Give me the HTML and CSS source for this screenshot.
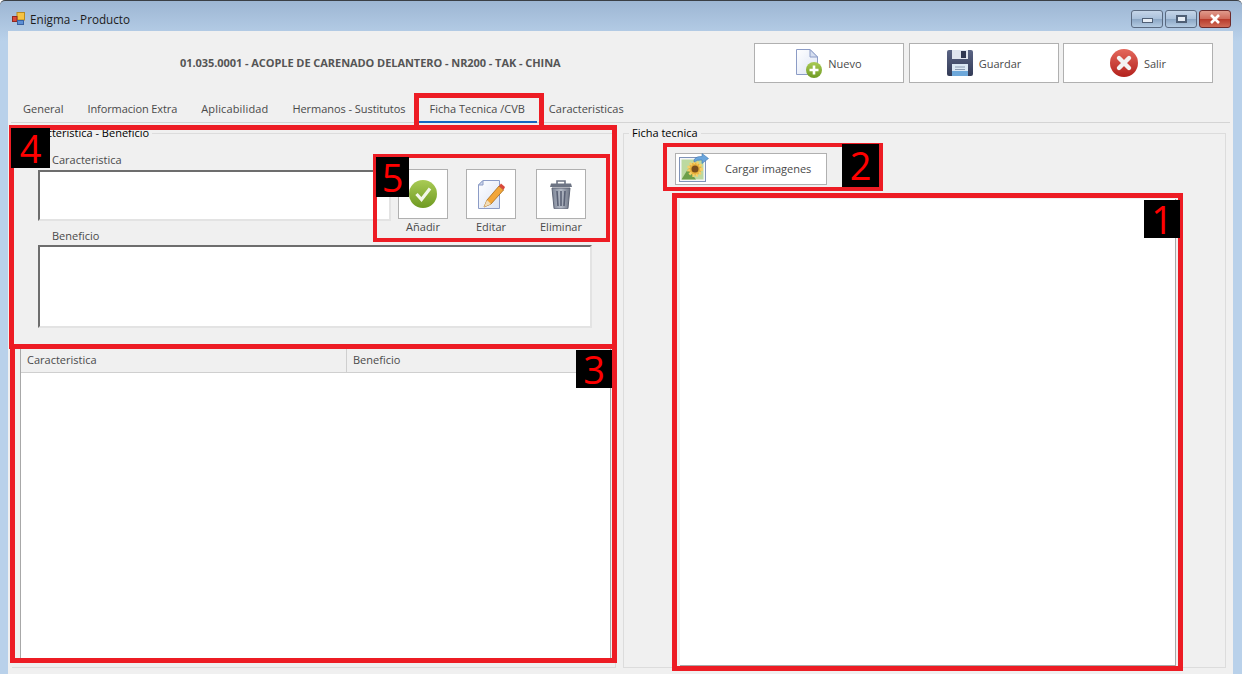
FILE: index.html
```html
<!DOCTYPE html>
<html>
<head>
    <meta charset="UTF-8">
    <title>Enigma - Producto</title>
    <link rel="stylesheet" href="styles.css">
</head>
<body>
<svg class="defs" width="0" height="0">
    <defs>
        <linearGradient id="red" x1="0" y1="0" x2="0" y2="1"><stop offset="0" stop-color="#e4685c"/><stop offset="1" stop-color="#b3211c"/></linearGradient>
        <linearGradient id="green" x1="0" y1="0" x2="0" y2="1"><stop offset="0" stop-color="#a9cb55"/><stop offset="1" stop-color="#6f9a22"/></linearGradient>
        <linearGradient id="disk" x1="0" y1="0" x2="0" y2="1"><stop offset="0" stop-color="#5a6484"/><stop offset="1" stop-color="#333b57"/></linearGradient>
        <linearGradient id="can" x1="0" y1="0" x2="1" y2="0"><stop offset="0" stop-color="#7d8596"/><stop offset="0.5" stop-color="#b4bac6"/><stop offset="1" stop-color="#6d7484"/></linearGradient>
        <linearGradient id="sheet" x1="0" y1="0" x2="1" y2="1"><stop offset="0" stop-color="#ffffff"/><stop offset="1" stop-color="#dbe3f4"/></linearGradient>
    </defs>
</svg>
<div class="window">
    <!-- title bar -->
    <div class="titlebar">
        <svg class="appicon" width="13" height="13" viewBox="0 0 13 13">
            <rect x="5" y="0.5" width="7.5" height="7.5" fill="#f6c343" stroke="#b98a1e"/>
            <rect x="0.5" y="4.5" width="4.5" height="5" fill="#d9483b" stroke="#8f2a22"/>
            <rect x="5.5" y="8.5" width="6" height="4" fill="#5b8fd6" stroke="#3a62a0"/>
        </svg>
        <span class="wintitle">Enigma - Producto</span>
        <div class="winbtns">
            <div class="winbtn"><span class="glyph-min"></span></div>
            <div class="winbtn"><span class="glyph-max"></span></div>
            <div class="winbtn close">
                <svg width="14" height="10" viewBox="0 0 14 10"><path d="M3 1 L11 9 M11 1 L3 9" stroke="#fff" stroke-width="2.6"/></svg>
            </div>
        </div>
    </div>

    <div class="client">
        <!-- product name and main actions -->
        <div class="header">
            <div class="product">01.035.0001 - ACOPLE DE CARENADO DELANTERO - NR200 - TAK - CHINA</div>
            <div class="actions">
                <button class="action" type="button">
                    <svg width="26" height="29" viewBox="0 0 26 29">
                        <path d="M0.5 0.5 H14 L21.5 8 V25.5 H0.5 Z" fill="url(#sheet)" stroke="#8c9cc6"/>
                        <path d="M14 0.5 V8 H21.5 Z" fill="#d5def0" stroke="#8c9cc6"/>
                        <circle cx="18" cy="21" r="8" fill="url(#green)"/>
                        <path d="M18 16.5 V25.5 M13.5 21 H22.5" stroke="#fff" stroke-width="2.6"/>
                    </svg>
                    <span>Nuevo</span>
                </button>
                <button class="action" type="button">
                    <svg width="26" height="26" viewBox="0 0 26 26">
                        <rect width="26" height="26" rx="2" fill="url(#disk)"/>
                        <rect x="5" y="0" width="16" height="9" fill="#dfe4ee"/>
                        <rect x="14" y="1" width="5" height="7" fill="#2f3650"/>
                        <rect x="5" y="14" width="16" height="12" fill="#dbe8f4"/>
                        <rect x="5" y="21" width="16" height="5" fill="#6ea8da"/>
                        <path d="M8 17 H18 M8 19.5 H18" stroke="#8a9ab0"/>
                    </svg>
                    <span>Guardar</span>
                </button>
                <button class="action" type="button">
                    <svg width="28" height="28" viewBox="0 0 28 28">
                        <circle cx="14" cy="14" r="14" fill="url(#red)"/>
                        <path d="M9 9 L19 19 M19 9 L9 19" stroke="#f3f3f3" stroke-width="4.4" stroke-linecap="round"/>
                    </svg>
                    <span>Salir</span>
                </button>
            </div>
        </div>

        <!-- tabs -->
        <div class="tabs">
            <a class="tab">General</a>
            <a class="tab tight">Informacion Extra</a>
            <a class="tab loose">Aplicabilidad</a>
            <a class="tab snug">Hermanos - Sustitutos</a>
            <a class="tab active">Ficha Tecnica /CVB</a>
            <a class="tab">Caracteristicas</a>
        </div>

        <div class="panels">
            <div class="leftcol">
                <fieldset class="group topgroup">
                    <legend>Caracteristica - Beneficio</legend>
                    <div class="topinner">
                        <div class="fieldrow">
                            <div class="field">
                                <label>Caracteristica</label>
                                <div class="textbox small"></div>
                            </div>
                            <div class="tools">
                                <div class="tool">
                                    <div class="toolbtn">
                                        <svg width="28" height="28" viewBox="0 0 28 28">
                                            <circle cx="14" cy="14" r="14" fill="url(#green)"/>
                                            <path d="M7.5 14 L12.5 19.5 L21 8.5" fill="none" stroke="#f4f7ea" stroke-width="3.2"/>
                                        </svg>
                                    </div>
                                    <span>Añadir</span>
                                </div>
                                <div class="tool">
                                    <div class="toolbtn">
                                        <svg width="27" height="29" viewBox="0 0 27 29">
                                            <path d="M0.5 5 L5 0.5 H21.5 V28.5 H0.5 Z" fill="url(#sheet)" stroke="#8c9cc6"/>
                                            <path d="M0.5 5 H5 V0.5 Z" fill="#cfd8ec" stroke="#8c9cc6"/>
                                            <path d="M6 27 L9 20 L21 6 L25.5 10 L13 24 Z" fill="#f2a63a" stroke="#a86a14" stroke-width="0.8"/>
                                            <path d="M21 6 L23 3.5 L27 7 L25.5 10 Z" fill="#d9483b"/>
                                            <path d="M6 27 L9 20 L13 24 Z" fill="#f2ddb8"/>
                                        </svg>
                                    </div>
                                    <span>Editar</span>
                                </div>
                                <div class="tool last">
                                    <div class="toolbtn">
                                        <svg width="22" height="29" viewBox="0 0 22 29">
                                            <path d="M7 4 V1 H15 V4" fill="none" stroke="#6d7484" stroke-width="1.6"/>
                                            <path d="M1 3.5 H21 L22 7 H0 Z" fill="#6d7484"/>
                                            <path d="M2 8 H20 L18 28 Q18 29 17 29 H5 Q4 29 4 28 Z" fill="url(#can)" stroke="#5c6374"/>
                                            <path d="M7 11 L8 26 M11 11 V26 M15 11 L14 26" stroke="#596074" stroke-width="1.6"/>
                                        </svg>
                                    </div>
                                    <span>Eliminar</span>
                                </div>
                            </div>
                        </div>
                        <div class="field">
                            <label>Beneficio</label>
                            <div class="textbox large"></div>
                        </div>
                    </div>
                </fieldset>
                <div class="table">
                    <div class="thead">
                        <div class="th first">Caracteristica</div>
                        <div class="th">Beneficio</div>
                    </div>
                </div>
            </div>

            <fieldset class="group rightgroup">
                <legend>Ficha tecnica</legend>
                <div class="rightinner">
                    <button class="upload" type="button">
                        <svg width="30" height="29" viewBox="0 0 30 29">
                            <rect x="0.5" y="4.5" width="26" height="24" fill="#f4f6fa" stroke="#7f93b8"/>
                            <rect x="2.5" y="6.5" width="22" height="20" fill="#bcd9a0"/>
                            <path d="M2.5 26.5 L9 16 L17 26.5 Z" fill="#6e9f4a"/>
                            <circle cx="16" cy="16" r="6.5" fill="#e8b23c" stroke="#f4cf6a" stroke-width="3" stroke-dasharray="2 1.5"/>
                            <circle cx="16" cy="16" r="3.5" fill="#7a4f1c"/>
                            <path d="M15 7 Q17 3 23 3.5 V0.5 L29.5 5.5 L23 10.5 V7 Q18 6.5 15 9 Z" fill="#6aa5dc" stroke="#3f78b2" stroke-width="0.6"/>
                        </svg>
                        <span>Cargar imagenes</span>
                    </button>
                    <div class="picture"></div>
                </div>
            </fieldset>
        </div>
    </div>

    <!-- red annotations drawn over the screenshot -->
    <div class="mark mark-tab"></div>
    <div class="mark mark-1"></div>
    <div class="mark mark-2"></div>
    <div class="mark mark-3"></div>
    <div class="mark mark-4"></div>
    <div class="mark mark-5"></div>
    <div class="num num-1">1</div>
    <div class="num num-2">2</div>
    <div class="num num-3">3</div>
    <div class="num num-4">4</div>
    <div class="num num-5">5</div>
</div>
</body>
</html>
```

FILE: styles.css
```css
* {
  box-sizing: border-box;
}
body {
  margin: 0;
  font-family: "Open Sans", "Noto Sans", sans-serif;
  font-size: 11px;
  color: #4a4a4a;
}
.defs {
  display: block;
}
.window {
  position: relative;
  width: 1242px;
  height: 674px;
  overflow: hidden;
  display: flex;
  flex-direction: column;
  padding: 0 9px 0 8px;
  background: linear-gradient(#9db6d3 0, #b9d1ea 40px, #b9d1ea 100%);
  border-top: 1px solid #3a3f45;
  border-top-left-radius: 5px;
  border-top-right-radius: 5px;
}

/* Title bar */
.titlebar {
  height: 30px;
  flex: none;
  display: flex;
  align-items: center;
  padding-top: 5px;
}
.appicon {
  margin-left: 4px;
}
.wintitle {
  margin-left: 5px;
  font-size: 11.7px;
  color: #1c1c1c;
}
.winbtns {
  margin-left: auto;
  margin-right: 2px;
  display: flex;
  gap: 2px;
}
.winbtn {
  width: 32px;
  height: 18px;
  border: 1px solid #5a6a80;
  border-radius: 3px;
  background: linear-gradient(#c5d5e8 0, #a9c0da 50%, #8ba6c4 51%, #b4cbe2 100%);
  display: flex;
  align-items: center;
  justify-content: center;
}
.winbtn.close {
  border-color: #6e2a2a;
  background: linear-gradient(#e09a8c 0, #cf6a5a 50%, #b83a2a 51%, #cf6a55 100%);
}
.glyph-min {
  width: 11px;
  height: 5px;
  margin-top: 4px;
  background: #e6edf5;
  border: 1px solid #4f5f75;
}
.glyph-max {
  width: 11px;
  height: 8px;
  background: #e6edf5;
  border: 2px solid #4f5f75;
  box-shadow: inset 0 0 0 1px #e6edf5;
}

/* Client area */
.client {
  flex: 1;
  background: #f0f0f0;
  display: flex;
  flex-direction: column;
  min-height: 0;
}
.header {
  height: 62px;
  flex: none;
  display: flex;
  align-items: flex-start;
  padding-top: 12px;
}
.product {
  width: 725px;
  padding: 12px 0 0 172px;
  font-weight: bold;
  letter-spacing: -0.06px;
  color: #555;
  white-space: nowrap;
}
.actions {
  margin-left: 21px;
  display: flex;
  gap: 5px;
}
.action {
  width: 150px;
  height: 40px;
  padding: 0;
  background: #fff;
  border: 1px solid #b0b0b0;
  font: inherit;
  color: #4a4a4a;
  display: flex;
  align-items: center;
  justify-content: center;
  gap: 6px;
}
.action:last-child {
  margin-left: -1px;
}

/* Tabs */
.tabs {
  height: 30px;
  flex: none;
  margin: 0 3px;
  display: flex;
  align-items: stretch;
  border-bottom: 1px solid #d4d4d4;
}
.tab {
  padding: 8px 12px 0;
  line-height: 15px;
  color: #4a4a4a;
}
.tab.tight {
  letter-spacing: -0.11px;
}
.tab.loose {
  letter-spacing: 0.15px;
}
.tab.snug {
  letter-spacing: -0.05px;
}
.tab.active {
  margin-left: 1px;
  padding-left: 11px;
  border-bottom: 2px solid #1565c0;
  margin-bottom: -1px;
}

/* Panels */
.panels {
  flex: 1;
  min-height: 0;
  display: flex;
  align-items: flex-start;
  padding: 3px 7px 0 4px;
  gap: 7px;
}
.group {
  margin: 0;
  padding: 0;
  min-width: 0;
  border: 1px solid #dcdcdc;
}
.group legend {
  margin-left: 7px;
  padding: 0 3px;
  line-height: 14px;
  color: #000;
}
.rightgroup legend {
  margin-left: 5px;
}
.leftcol {
  width: 604px;
  height: 542px;
  flex: none;
  border-bottom: 1px solid #dcdcdc;
  border-right: 1px solid #dcdcdc;
}
.topgroup {
  height: 220px;
  border-bottom: 0;
}
.topinner {
  padding-left: 25px;
}
.fieldrow {
  display: flex;
  align-items: flex-start;
  height: 88px;
}
.field label {
  display: block;
  padding-left: 14px;
  line-height: 15px;
}
.fieldrow .field {
  padding-top: 12px;
}
.textbox {
  margin-top: 3px;
  background: #fff;
  border: 2px solid #e3e3e3;
  border-top-color: #6d6d6d;
  border-left-color: #6d6d6d;
}
.textbox.small {
  width: 353px;
  height: 51px;
}
.textbox.large {
  width: 554px;
  height: 83px;
  margin-top: 2px;
}
.tools {
  margin-left: 7px;
  margin-top: 29px;
  display: flex;
  gap: 18px;
}
.tool {
  width: 50px;
  text-align: center;
  line-height: 15px;
}
.tool.last {
  margin-left: 2px;
}
.tool span {
  display: block;
}
.toolbtn {
  width: 50px;
  height: 50px;
  background: #fff;
  border: 1px solid #b0b0b0;
  display: flex;
  align-items: center;
  justify-content: center;
}

/* Grid */
.table {
  margin: 3px 0 0 8px;
  width: 591px;
  height: 314px;
  background: #fff;
  border-left: 1px solid #a8a8a8;
  border-right: 1px solid #a8a8a8;
  border-bottom: 1px solid #a8a8a8;
}
.thead {
  height: 24px;
  background: #f0f0f0;
  border-bottom: 1px solid #cfcfcf;
  display: flex;
}
.th {
  padding: 3px 6px 0;
  line-height: 15px;
}
.th.first {
  width: 326px;
  border-right: 1px solid #cfcfcf;
}

/* Right group */
.rightgroup {
  flex: 1;
  height: 542px;
}
.rightinner {
  padding-left: 51px;
}
.upload {
  display: flex;
  align-items: center;
  width: 152px;
  height: 32px;
  margin-top: 13px;
  padding: 0 0 1px 3px;
  background: #fff;
  border: 1px solid #b0b0b0;
  font: inherit;
  color: #4a4a4a;
  overflow: visible;
}
.upload svg {
  flex: none;
  margin-top: -2px;
}
.upload span {
  margin-left: 16px;
}
.picture {
  margin: 14px 0 0 5px;
  width: 496px;
  height: 467px;
  background: #fff;
  border-right: 1px solid #a8a8a8;
  border-bottom: 1px solid #a8a8a8;
}

/* Annotations */
.mark {
  position: absolute;
  border: 5px solid #ed1c24;
}
.mark-tab { left: 414px; top: 92px; width: 130px; height: 37px; }
.mark-1 { left: 672px; top: 192px; width: 511px; height: 478px; }
.mark-2 { left: 663px; top: 142px; width: 220px; height: 48px; border-width: 4px; }
.mark-3 { left: 10px; top: 343px; width: 607px; height: 319px; }
.mark-4 { left: 9px; top: 124px; width: 608px; height: 224px; }
.mark-5 { left: 373px; top: 153px; width: 237px; height: 88px; border-width: 4px; }
.num {
  position: absolute;
  background: #000;
  color: #f00;
  font-size: 38px;
  text-align: center;
  line-height: 38px;
}
.num-1 { left: 1144px; top: 199px; width: 36px; height: 38px; }
.num-2 { left: 842px; top: 143px; width: 37px; height: 43px; line-height: 43px; }
.num-3 { left: 576px; top: 349px; width: 36px; height: 38px; }
.num-4 { left: 11px; top: 127px; width: 39px; height: 40px; line-height: 40px; }
.num-5 { left: 376px; top: 156px; width: 33px; height: 40px; line-height: 40px; }
```
